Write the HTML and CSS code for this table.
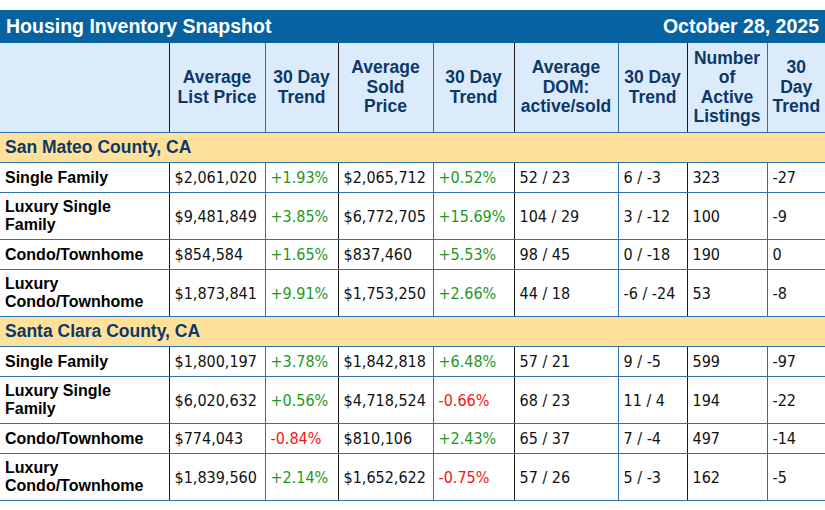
FILE: index.html
```html
<!DOCTYPE html>
<html>
<head>
<meta charset="utf-8">
<link rel="stylesheet" href="styles.css">
</head>
<body>
<div class="title">
  <span>Housing Inventory Snapshot</span>
  <span>October 28, 2025</span>
</div>
<table class="grid">
  <colgroup>
    <col class="c-label"><col class="c-lp"><col class="c-t1"><col class="c-sp"><col class="c-t2"><col class="c-dom"><col class="c-t3"><col class="c-num"><col class="c-t4">
  </colgroup>
  <thead>
    <tr>
      <th></th>
      <th class="k">Average<br>List Price</th>
      <th>30 Day<br>Trend</th>
      <th class="k">Average<br>Sold<br>Price</th>
      <th>30 Day<br>Trend</th>
      <th class="k">Average<br>DOM:<br>active/sold</th>
      <th>30 Day<br>Trend</th>
      <th class="k">Number<br>of<br>Active<br>Listings</th>
      <th>30<br>Day<br>Trend</th>
    </tr>
  </thead>
  <tbody>
    <tr class="band"><td colspan="9">San Mateo County, CA</td></tr>
    <tr>
      <td class="lbl">Single Family</td>
      <td class="k">$2,061,020</td><td class="up">+1.93%</td>
      <td class="k">$2,065,712</td><td class="up">+0.52%</td>
      <td class="k">52 / 23</td><td>6 / -3</td>
      <td class="k">323</td><td>-27</td>
    </tr>
    <tr class="tall">
      <td class="lbl">Luxury Single<br>Family</td>
      <td class="k">$9,481,849</td><td class="up">+3.85%</td>
      <td class="k">$6,772,705</td><td class="up">+15.69%</td>
      <td class="k">104 / 29</td><td>3 / -12</td>
      <td class="k">100</td><td>-9</td>
    </tr>
    <tr>
      <td class="lbl">Condo/Townhome</td>
      <td class="k">$854,584</td><td class="up">+1.65%</td>
      <td class="k">$837,460</td><td class="up">+5.53%</td>
      <td class="k">98 / 45</td><td>0 / -18</td>
      <td class="k">190</td><td>0</td>
    </tr>
    <tr class="tall">
      <td class="lbl">Luxury<br>Condo/Townhome</td>
      <td class="k">$1,873,841</td><td class="up">+9.91%</td>
      <td class="k">$1,753,250</td><td class="up">+2.66%</td>
      <td class="k">44 / 18</td><td>-6 / -24</td>
      <td class="k">53</td><td>-8</td>
    </tr>
    <tr class="band"><td colspan="9">Santa Clara County, CA</td></tr>
    <tr>
      <td class="lbl">Single Family</td>
      <td class="k">$1,800,197</td><td class="up">+3.78%</td>
      <td class="k">$1,842,818</td><td class="up">+6.48%</td>
      <td class="k">57 / 21</td><td>9 / -5</td>
      <td class="k">599</td><td>-97</td>
    </tr>
    <tr class="tall">
      <td class="lbl">Luxury Single<br>Family</td>
      <td class="k">$6,020,632</td><td class="up">+0.56%</td>
      <td class="k">$4,718,524</td><td class="down">-0.66%</td>
      <td class="k">68 / 23</td><td>11 / 4</td>
      <td class="k">194</td><td>-22</td>
    </tr>
    <tr>
      <td class="lbl">Condo/Townhome</td>
      <td class="k">$774,043</td><td class="down">-0.84%</td>
      <td class="k">$810,106</td><td class="up">+2.43%</td>
      <td class="k">65 / 37</td><td>7 / -4</td>
      <td class="k">497</td><td>-14</td>
    </tr>
    <tr class="tall">
      <td class="lbl">Luxury<br>Condo/Townhome</td>
      <td class="k">$1,839,560</td><td class="up">+2.14%</td>
      <td class="k">$1,652,622</td><td class="down">-0.75%</td>
      <td class="k">57 / 26</td><td>5 / -3</td>
      <td class="k">162</td><td>-5</td>
    </tr>
  </tbody>
</table>
</body>
</html>
```

FILE: styles.css
```css
html, body {
  margin: 0;
  padding: 0;
  background: #ffffff;
}
body {
  padding-top: 10px;
  font-family: "Liberation Sans", Arial, sans-serif;
  width: 825px;
  overflow: hidden;
}
.title {
  display: flex;
  justify-content: space-between;
  align-items: center;
  height: 33px;
  padding: 0 6px;
  background: #0762a1;
  color: #ffffff;
  font-weight: bold;
  font-size: 19.5px;
  box-sizing: border-box;
}
.grid {
  border-collapse: collapse;
  table-layout: fixed;
  width: 825px;
}
.c-label { width: 169px; }
.c-lp { width: 96px; }
.c-t1 { width: 73px; }
.c-sp { width: 95px; }
.c-t2 { width: 81px; }
.c-dom { width: 104px; }
.c-t3 { width: 69px; }
.c-num { width: 80px; }
.c-t4 { width: 58px; }

.grid th {
  background: #dcebfb;
  color: #0c3868;
  font-size: 17.5px;
  line-height: 19.5px;
  font-weight: bold;
  height: 89px;
  padding: 0 2px;
  text-align: center;
  vertical-align: middle;
  border-left: 1px solid #2f70ab;
  border-bottom: 1px solid #2f70ab;
}
.grid th:first-child {
  border-left: none;
}
.grid td {
  font-family: "DejaVu Sans Condensed", "DejaVu Sans", Verdana, sans-serif;
  font-size: 16px;
  color: #111111;
  height: 29px;
  padding: 0 5px;
  vertical-align: middle;
  white-space: nowrap;
  border-left: 1px solid #2f70ab;
  border-bottom: 1px solid #2f70ab;
}
.grid td:first-child {
  border-left: none;
}
.grid th.k,
.grid td.k {
  border-left: 1px solid #1b1b1b;
}
.grid tr.tall td {
  height: 46px;
}
.grid td.lbl {
  font-family: "Liberation Sans", Arial, sans-serif;
  font-weight: bold;
  font-size: 16px;
  line-height: 18px;
  color: #000000;
}
.grid tr.band td {
  background: #ffe19b;
  font-family: "Liberation Sans", Arial, sans-serif;
  color: #0c3868;
  font-weight: bold;
  font-size: 17.5px;
  height: 29px;
}
.grid td.up {
  color: #1f971f;
}
.grid td.down {
  color: #f01616;
}
```
